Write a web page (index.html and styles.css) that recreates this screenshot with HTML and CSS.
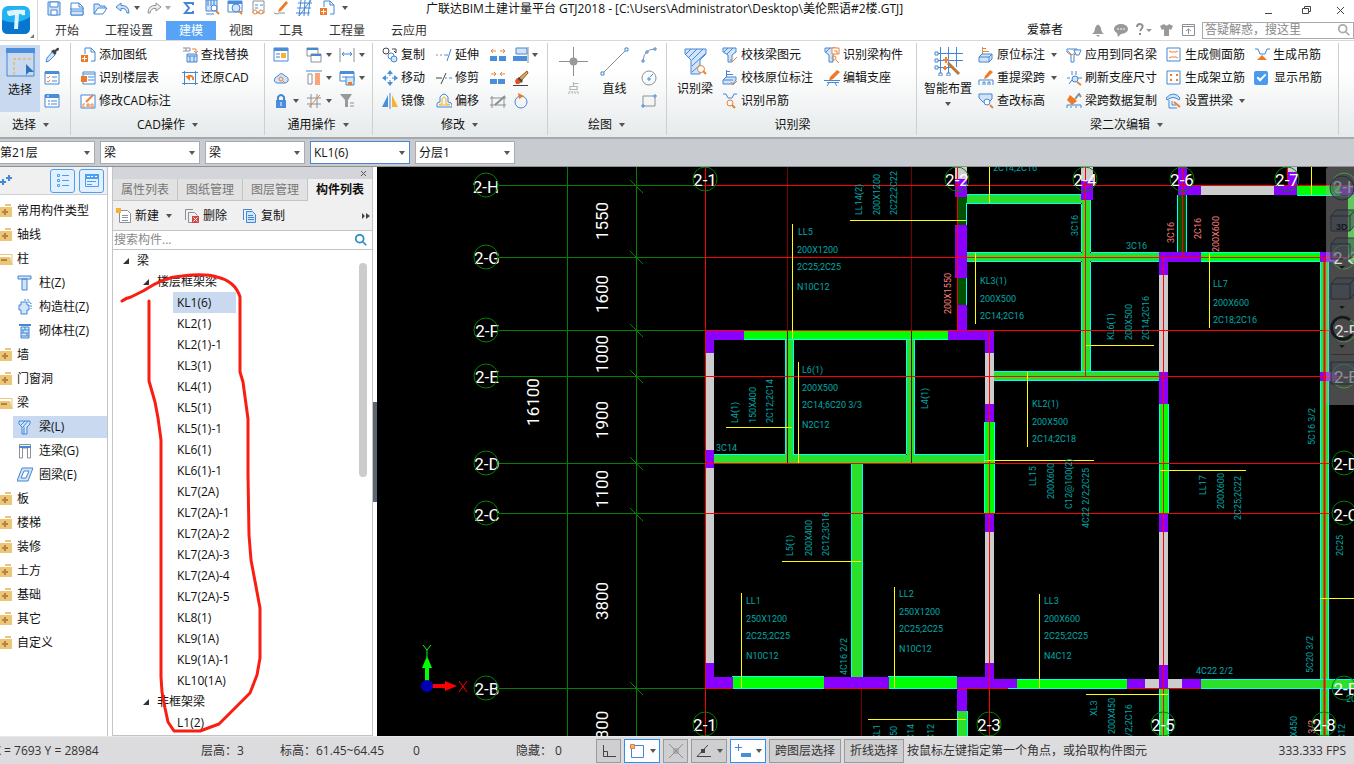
FILE: index.html
```
<!DOCTYPE html>
<html lang="zh-CN">
<head>
<meta charset="utf-8">
<title>广联达BIM土建计量平台 GTJ2018</title>
<link rel="stylesheet" href="styles.css">
</head>
<body>
<svg class="sprite" aria-hidden="true">
<symbol id="save" viewBox="0 0 16 16"><path class="b p" d="M2 2h12v13H2z"/><path class="b w" d="M4 2h8v5H4zM5 10h6v5H5z"/></symbol>
<symbol id="file" viewBox="0 0 16 16"><path class="b w" d="M2 3h8l4 4v8H2z"/><path class="b" d="M10 3v4h4M1 9h14"/><path class="b p" d="M2 11h12v4H2z"/></symbol>
<symbol id="open" viewBox="0 0 16 16"><path class="b p" d="M2 14V4h5l1 2h5v3"/><path class="b w" d="M2 14l4-6h9l-4 6z"/></symbol>
<symbol id="undo" viewBox="0 0 16 16"><path class="b p" d="M6 3L1 7l5 4V8.500q5-1 6 4.500h2q0-8-8-7.500z"/></symbol>
<symbol id="redo" viewBox="0 0 16 16"><path class="g pg" d="M10 3l5 4-5 4V8.500q-5-1-6 4.500H2q0-8 8-7.500z"/></symbol>
<symbol id="sum" viewBox="0 0 16 16"><path class="b2" d="M12 5V3H4l4 5-4 5h8v-2"/></symbol>
<symbol id="calc" viewBox="0 0 16 16"><path class="b p" d="M2 0h11v11H2z"/><path class="b" d="M4 0v6M7 0v6M10 0v6M2 14h8"/><circle class="b w" cx="10" cy="8" r="3"/><path class="o2" d="M12 11l3 3"/></symbol>
<symbol id="view" viewBox="0 0 16 16"><path class="b w" d="M1 1h14v11H1z"/><path class="fb" d="M1 1h14v3H1z"/><circle class="b p" cx="9" cy="8" r="4"/><path class="o2" d="M12 11l3 3"/></symbol>
<symbol id="clip" viewBox="0 0 16 16"><path class="g w" d="M3 1h11v12H3z"/><path class="b" d="M5 5h3M10 5h3M5 8h3"/><circle class="o w" cx="5" cy="12" r="2"/><circle class="o w" cx="11" cy="12" r="2"/><path class="o" d="M7 12h2"/></symbol>
<symbol id="pen" viewBox="0 0 16 16"><path class="fo" d="M13 1l2 2-7 8-3 1 1-3z"/><path class="g" d="M1 13q4 2 5 0h6"/></symbol>
<symbol id="gridi" viewBox="0 0 16 16"><path class="b" d="M2 3h14M1 8h14M0 13h14M5 0L3 16M9 0L8 16M14 0l-2 16M3 16L15 0"/></symbol>
<symbol id="addfile" viewBox="0 0 16 16"><path class="b w" d="M5 7V1h6l4 4v9h-4"/><path class="b" d="M11 1v4h4"/><path class="fo" d="M1 8h7v7H1z"/><path class="wh" d="M4.500 9v5M2 11.500h5"/></symbol>
<symbol id="drop" viewBox="0 0 16 16"><path class="fd" d="M9 3q1-1 2 0l2-2q2-1 2 1t-2 2l-1 1q1 1 0 2l-1 1-4-4z"/><path class="b p" d="M8 5l3 3-6 6-3 1 1-4z"/></symbol>
<symbol id="checks" viewBox="0 0 16 16"><path class="b w" d="M1 2h14v12H1z"/><path class="fb" d="M1 1h14v3H1z"/><path class="o" d="M3 7l1 1 2-2M3 11l1 1 2-2"/><path class="b" d="M8 7h5M8 11h5"/></symbol>
<symbol id="lists" viewBox="0 0 16 16"><path class="b w" d="M1 2h14v12H1z"/><path class="fb" d="M1 1h14v4H1z"/><path class="b" d="M4 8h2M7 8h6M4 11h2M7 11h6"/><path class="wh" d="M3 3h2"/></symbol>
<symbol id="layers" viewBox="0 0 16 16"><path class="b w" d="M3 2h12v12H3z"/><path class="b" d="M3 4h12M8 7h6M8 10h6"/><path class="fo" d="M1 6h6v6H1z"/></symbol>
<symbol id="cad" viewBox="0 0 16 16"><path class="b w" d="M1 2h14v13H1z"/><path class="o" d="M5 11H3v3h2M7 14v-3h2v3M7 13h2M11 11h2v3h-2z"/><path class="o2" d="M6 9l7-7"/></symbol>
<symbol id="replace" viewBox="0 0 16 16"><path class="g" d="M1 1h7v3H1M4 1v3"/><path class="o" d="M10 2h4v4M12 4l2 2 2-2"/><path class="b p" d="M5 7h10v8H5z"/><path class="b" d="M5 9h10M8 9v6M12 9v6"/></symbol>
<symbol id="restore" viewBox="0 0 16 16"><path class="b" d="M2.500 1v14M13.500 1v14M0 2.500h16M0 13.500h16"/><path class="o2" d="M11 10q1-5-5-4"/><path class="fo" d="M3 6h5v5z"/></symbol>
<symbol id="win1" viewBox="0 0 16 16"><path class="b w" d="M1 1h14v13H1z"/><path class="fb" d="M1 1h14v3H1z"/><path class="b" d="M3 7h4M3 10h4"/><path class="fy" d="M8 6h5v5H8z"/></symbol>
<symbol id="cloud" viewBox="0 0 16 16"><path class="b p" d="M4 13q-4-1-2-5 2-2 3-2 3-5 7 0 4 1 3 5-1 2-3 2z"/><circle class="o" cx="8" cy="9" r="2"/><path class="o" d="M10 11l2 2"/></symbol>
<symbol id="lock" viewBox="0 0 16 16"><path class="fb" d="M3 7h10v8H3z"/><path class="b2" d="M5 8V4q3-4 6 0v4"/><path class="wh" d="M8 9v4"/></symbol>
<symbol id="wins" viewBox="0 0 16 16"><path class="g w" d="M1 1h11v8H1z"/><path class="b2" d="M1 2h11"/><path class="g w" d="M5 7h10v8H5z"/><path class="b2" d="M5 8h10"/></symbol>
<symbol id="bars" viewBox="0 0 16 16"><path class="b" d="M0 1h16"/><path class="g w" d="M2 4h4v10H2z"/><path class="fs" d="M9 3h5v12H9z"/></symbol>
<symbol id="hash" viewBox="0 0 16 16"><path class="g" d="M5 1v14M11 1v14M1 5h14M1 11h14"/><path class="o" d="M3 14L14 2"/></symbol>
<symbol id="dim" viewBox="0 0 16 16"><path class="g" d="M1 1v14M15 1v14"/><path class="b" d="M3 7h10M5 5L3 7l2 2M11 5l2 2-2 2"/></symbol>
<symbol id="winsave" viewBox="0 0 16 16"><path class="b w" d="M1 2h14v9H1z"/><path class="fb" d="M1 1h14v3H1z"/><path class="b" d="M3 7h5"/><path class="b p" d="M7 7h8v8H7z"/><path class="fo" d="M9 12h4v3H9z"/></symbol>
<symbol id="funnelg" viewBox="0 0 16 16"><path class="fg" d="M1 1h12L9 7v7H6V7z"/><path class="g" d="M11 10h4M11 13h4"/></symbol>
<symbol id="copy2" viewBox="0 0 16 16"><circle class="d w" cx="4" cy="4" r="3"/><path class="d" d="M10 2h4v4M12 4l2 2"/><circle class="b w" cx="9" cy="9" r="3"/><circle class="b p" cx="12" cy="12" r="3"/></symbol>
<symbol id="move" viewBox="0 0 16 16"><path class="b" d="M8 1v5M8 10v5M1 8h5M10 8h5"/><path class="fb" d="M5 4l3-4 3 4zM5 12l3 4 3-4zM4 5L0 8l4 3zM12 5l4 3-4 3z"/></symbol>
<symbol id="mirror" viewBox="0 0 16 16"><path class="fb" d="M6 2v12H0z"/><path class="b" d="M8 0v16"/><path class="fy" d="M10 2v12h6z"/></symbol>
<symbol id="extend" viewBox="0 0 16 16"><path class="g" d="M0 8h2M4 8h2M8 8h2"/><path class="b" d="M10 8h2M11 14l4-12"/></symbol>
<symbol id="trim" viewBox="0 0 16 16"><path class="d" d="M0 8h6M5 14L10 3"/><path class="b" d="M9 8h2M13 8h3"/></symbol>
<symbol id="offset" viewBox="0 0 16 16"><path class="b" d="M1 14v-3q0-2 3-2V4q4-6 8 0v5q4 0 4 3v2z"/><path class="yl" d="M3 12q0-1 3-1V6q2-4 4 0v5q4 0 4 1z"/></symbol>
<symbol id="brk" viewBox="0 0 16 16"><path class="fb" d="M0 9h7v5H0zM9 9h7v5H9z"/><path class="o" d="M1 4h5M3 2L1 4l2 2M10 4h5M13 2l2 2-2 2"/></symbol>
<symbol id="join" viewBox="0 0 16 16"><path class="fb" d="M0 9h7v5H0zM8 9h7v5H8z"/><path class="o" d="M1 4h5M4 2l2 2-2 2M10 4h5M12 2l-2 2 2 2"/></symbol>
<symbol id="split" viewBox="0 0 16 16"><path class="g" d="M2 3v12M14 3v12M0 5h16M0 12h16"/><path class="g2" d="M5 12l10-9"/></symbol>
<symbol id="align" viewBox="0 0 16 16"><path class="b p" d="M3 1h11v6H3z"/><path class="fb" d="M0 9h14v5H0z"/><path class="g" d="M15 0v16"/></symbol>
<symbol id="brush" viewBox="0 0 16 16"><path class="d" d="M0 15.500h15"/><path fill="#e0a566" stroke="#8a5a24" d="M14 1l1 2-7 8-2-3z"/><path class="fd" d="M6 7l4 4-2 2-4-4z"/><path fill="#e0521f" d="M4 8l4 4-2 2H3l-1-3z"/></symbol>
<symbol id="rotate" viewBox="0 0 16 16"><circle class="b" cx="8" cy="9" r="6"/><path class="fo" d="M5 0l6 3-5 3z"/></symbol>
<symbol id="arc" viewBox="0 0 16 16"><path class="g" d="M2 14Q3 2 14 2"/><path class="b w" d="M1 13h2v2H1zM13 1h2v2h-2zM5 4h2v2H5z"/></symbol>
<symbol id="circ" viewBox="0 0 16 16"><circle class="g" cx="8" cy="8" r="7"/><path class="b" d="M7 8h2v2H7zM9 7l3-3"/></symbol>
<symbol id="rect" viewBox="0 0 16 16"><path class="g" d="M2 3h12v10H2z"/><path class="b w" d="M13 2h2v2h-2zM1 12h2v2H1z"/></symbol>
<symbol id="beam" viewBox="0 0 16 16"><path class="b p" d="M2 2h11v3l-3 3v7H5V8L2 5z"/><path class="b" d="M4 6l4-4M6 8l5-6M7 15V8"/></symbol>
<symbol id="beamchk" viewBox="0 0 16 16"><path class="b p" d="M1 1h13v4l-4 3v7H6V8L1 5z"/><path class="b" d="M2 5l4-4M5 7l6-6"/><path class="o" d="M8 12l2 3 5-5"/></symbol>
<symbol id="orig" viewBox="0 0 16 16"><path class="o" d="M4.500 0v8M4 1.500h4M4 4.500h7"/><path class="b p" d="M1 10l3-3h10v5l-3 3H1zM1 10h10v5M11 10l3-3"/></symbol>
<symbol id="origchk" viewBox="0 0 16 16"><path class="b" d="M4.500 0v8M4 1.500h4M4 4.500h7"/><path class="b p" d="M1 10l3-3h10v3l-3 4H1zM1 10h10"/><path class="o" d="M9 12l2 3 4-4"/></symbol>
<symbol id="hang" viewBox="0 0 16 16"><path class="b" d="M1 1h3l2 4h4l2-4h3"/><circle class="o" cx="8" cy="10" r="3"/><path class="o2" d="M10 12l3 3"/></symbol>
<symbol id="beamid" viewBox="0 0 16 16"><path class="b p" d="M1 1h11v4L9 8v7H5V8L1 5z"/><path class="b" d="M2 5l4-4"/><path class="o w" d="M8 1h7v6H8zM10 4h3v3"/><circle class="o" cx="10" cy="11" r="2"/><path class="o" d="M12 13l3 3"/></symbol>
<symbol id="seat" viewBox="0 0 16 16"><path class="fo" d="M13 0l3 2-7 7-4 2 1-4z"/><path class="b" d="M0 10.500h16M3 12.500h12M5 13l-2 3M11 13l2 3"/></symbol>
<symbol id="span" viewBox="0 0 16 16"><path class="fo" d="M12 0l3 2-6 6-3 1 1-3z"/><path class="b" d="M1 15v-5h14v5M5 15v-3h2v3M10 15v-3h2v3"/></symbol>
<symbol id="elev" viewBox="0 0 16 16"><path class="b p" d="M1 1h13v5l-3 3H5L1 5z"/><circle class="b w" cx="9" cy="9" r="3"/><path class="o2" d="M12 12l3 3"/></symbol>
<symbol id="apply" viewBox="0 0 16 16"><path class="b w" d="M1 2h10v3L8 8v7H5V8L1 5z"/><path class="o" d="M2 4l4 4 5-4"/><path class="b w" d="M8 3h7l-2 5h-3z"/></symbol>
<symbol id="refresh" viewBox="0 0 16 16"><path class="b" d="M6 1v4M10 1v4M1 8h3M12 8h4M3 14l3-4"/><circle class="b p" cx="9" cy="9" r="3"/><path class="o2" d="M11 12l4 3"/></symbol>
<symbol id="spancopy" viewBox="0 0 16 16"><path class="g2" d="M9 6l4-5 2 3"/><path class="fo" d="M4 2l7 6-5 4-5-5z"/><path class="b" d="M1 15v-3h14v3M5 15v-2M10 15v-2"/></symbol>
<symbol id="side" viewBox="0 0 16 16"><path class="b w" d="M1 1h13v13H1z"/><path class="o" d="M3 4l2 1h5l2-1M3 11l2-1h5l2 1"/></symbol>
<symbol id="dots" viewBox="0 0 16 16"><path class="b w" d="M1 1h13v13H1z"/><path class="fo" d="M4 4h2v2H4zM10 4h2v2h-2zM4 9h2v2H4zM10 9h2v2h-2z"/></symbol>
<symbol id="arch" viewBox="0 0 16 16"><path class="b p" d="M0 5q8-8 14 0l-1 2q-6-5-12 0z"/><path class="b" d="M3 7v8h8M6 8v4h4"/><path class="o2" d="M8 9l6 5"/></symbol>
<symbol id="hang2" viewBox="0 0 16 16"><path class="b" d="M1 2h3l2 5h5l2-5h3"/><path class="fo" d="M3 13h10L8 8z"/></symbol>
<symbol id="search" viewBox="0 0 16 16"><circle class="c" cx="6.500" cy="6.500" r="4.500"/><path class="c" d="M10 10l4 4"/></symbol>
<symbol id="fold" viewBox="0 0 16 16"><path class="ft" d="M0 4h12v10H0zM5 1h6v2H5z"/><path class="tb" d="M5 6v6M2 9h6"/></symbol>
<symbol id="folded" viewBox="0 0 16 16"><path class="tl" d="M0 3.500h12v9"/><path class="ft" d="M0 6h10l3 8H0z"/><path class="tb" d="M1 9h6"/></symbol>
<symbol id="col" viewBox="0 0 16 16"><path class="b p" d="M1 1h13v3H1zM5 4h5v11H5z"/></symbol>
<symbol id="col2" viewBox="0 0 16 16"><path class="b" stroke-dasharray="2 1" d="M7 1h5v3h2v6"/><path class="b p" d="M4 3h6v3h2v5h-2v4H4v-4H2V6h2z"/></symbol>
<symbol id="col3" viewBox="0 0 16 16"><path class="b2" d="M2 2h12"/><path class="b p" d="M4 4h8v11H4z"/><path class="b" d="M4 7h8M4 10h8M4 13h8M8 4v3M6 7v3M10 10v3"/></symbol>
<symbol id="link" viewBox="0 0 16 16"><path class="g w" d="M2.500 15V1.500h11V15h-3V5h-5v10z"/><path class="b2" d="M2 4h12"/></symbol>
<symbol id="ring" viewBox="0 0 16 16"><path class="b p" d="M5 1h11l-5 13H0z"/><path class="b w" d="M7 4h5l-3 7H4z"/></symbol>
</svg>

<header class="top">
  <div class="logo"><svg viewBox="0 0 30 30"><rect x="0" y="0" width="28" height="28" rx="6" fill="#22b4f2"/><path d="M0 14q14 6 28-3v11q0 6-6 6H6q-6 0-6-6z" fill="#0876cf"/><path d="M5 5q9-2 18-1v5q-3 1-4-1h-2l-1 15h-4l1-14-5 1q-3 0-3-5z" fill="#ddf3ff"/></svg><i class="corner"></i></div>
  <div class="titlebar">
    <div class="quick">
      <svg class="ic"><use href="#save"/></svg><svg class="ic"><use href="#file"/></svg><svg class="ic"><use href="#open"/></svg>
      <svg class="ic"><use href="#undo"/></svg><i class="caret near"></i><svg class="ic"><use href="#redo"/></svg><i class="caret near dim"></i>
      <svg class="ic"><use href="#sum"/></svg><svg class="ic"><use href="#calc"/></svg><svg class="ic"><use href="#view"/></svg><svg class="ic"><use href="#clip"/></svg><svg class="ic"><use href="#pen"/></svg><svg class="ic"><use href="#gridi"/></svg><svg class="ic"><use href="#addfile"/></svg><i class="caret bar"></i>
    </div>
    <h1>广联达BIM土建计量平台 GTJ2018 - [C:\Users\Administrator\Desktop\美伦熙语#2楼.GTJ]</h1>
    <div class="winbtns"><svg viewBox="0 0 90 16"><path class="d" d="M6 11.500h7M43.500 6.500h6v5h-6zM45.500 6V4.500h6v5h-2M78 5l7 7M85 5l-7 7"/></svg></div>
  </div>
  <nav class="tabs">
    <button>开始</button><button>工程设置</button><button class="on">建模</button><button>视图</button><button>工具</button><button>工程量</button><button>云应用</button>
    <span class="user">爱慕者</span>
    <svg class="usericons" viewBox="0 0 110 18"><path class="fg" d="M2 13q3-2 3-6 3-7 6 0 0 4 3 6zM6 14h4l-2 2z"/><ellipse class="fg" cx="31" cy="8" rx="7" ry="5"/><path class="fg" d="M27 12h5l-4 4z"/><path class="wh" d="M27 8h2M30 8h2M33 8h2"/><path class="g2" d="M47 6q0-3 3-3 4 1 2 4l-2 3M50 12v2"/><path class="fg" d="M56 8h6l-3 3zM70 5l4-2q3 3 5 0l4 2-2 4-2-1v7h-5V8l-2 1z"/><path class="g" d="M92.500 3.500h12v11h-12zM92 5.500h13M98.500 13V8M96 10l2.500-2 2.500 2"/></svg>
    <label class="ask"><input type="text" aria-label="搜索" placeholder="答疑解惑，搜这里"><svg class="ic"><use href="#search"/></svg></label>
  </nav>
</header>

<section class="ribbon">
  <div class="group g1"><div class="gb">
    <button class="big sel"><svg class="bi" viewBox="0 0 29 29"><path class="b" fill="#dfeafa" d="M1 1h27v27H1z"/><path class="fb" d="M0 0h29v5H0z"/><path fill="none" stroke="#f0ae20" stroke-dasharray="3 2" d="M8 27V11h20"/><path fill="#2f72bd" d="M20 16v11l3-3h5z"/></svg>选择</button>
    <div class="cols"><button aria-label="拾取"><svg class="ic"><use href="#drop"/></svg></button><button aria-label="批量选择"><svg class="ic"><use href="#checks"/></svg></button><button aria-label="属性"><svg class="ic"><use href="#lists"/></svg></button></div>
  </div><div class="gl">选择<i class="caret"></i></div></div>

  <div class="group g2c"><div class="gb"><div class="cols">
    <button><svg class="ic"><use href="#addfile"/></svg>添加图纸</button><button><svg class="ic"><use href="#layers"/></svg>识别楼层表</button><button><svg class="ic"><use href="#cad"/></svg>修改CAD标注</button>
    <button><svg class="ic"><use href="#replace"/></svg>查找替换</button><button><svg class="ic"><use href="#restore"/></svg>还原CAD</button>
  </div></div><div class="gl">CAD操作<i class="caret"></i></div></div>

  <div class="group g3"><div class="gb"><div class="cols tight">
    <button><svg class="ic"><use href="#win1"/></svg></button><button><svg class="ic"><use href="#cloud"/></svg></button><button><svg class="ic"><use href="#lock"/></svg><i class="caret"></i></button>
    <button><svg class="ic"><use href="#wins"/></svg><i class="caret"></i></button><button><svg class="ic"><use href="#bars"/></svg><i class="caret"></i></button><button><svg class="ic"><use href="#hash"/></svg><i class="caret"></i></button>
    <button><svg class="ic"><use href="#dim"/></svg><i class="caret"></i></button><button><svg class="ic"><use href="#winsave"/></svg><i class="caret"></i></button><button><svg class="ic"><use href="#funnelg"/></svg></button>
  </div></div><div class="gl">通用操作<i class="caret"></i></div></div>

  <div class="group g4"><div class="gb"><div class="cols">
    <button><svg class="ic"><use href="#copy2"/></svg>复制</button><button><svg class="ic"><use href="#move"/></svg>移动</button><button><svg class="ic"><use href="#mirror"/></svg>镜像</button>
    <button><svg class="ic"><use href="#extend"/></svg>延伸</button><button><svg class="ic"><use href="#trim"/></svg>修剪</button><button><svg class="ic"><use href="#offset"/></svg>偏移</button>
    <button><svg class="ic"><use href="#brk"/></svg></button><button><svg class="ic"><use href="#join"/></svg></button><button><svg class="ic"><use href="#split"/></svg></button>
  </div><div class="cols edit">
    <button><svg class="ic"><use href="#align"/></svg><i class="caret"></i></button><button><svg class="ic"><use href="#brush"/></svg></button><button><svg class="ic"><use href="#rotate"/></svg></button>
  </div></div><div class="gl">修改<i class="caret"></i></div></div>

  <div class="group g5"><div class="gb">
    <button class="big off"><svg class="bi" viewBox="0 0 29 29"><path class="g" d="M14.500 0v29M0 14.500h29"/><circle class="fg" cx="14.500" cy="14.500" r="4"/></svg>点</button>
    <button class="big"><svg class="bi" viewBox="0 0 29 29"><path class="g" d="M2 27L27 2"/><path class="b w" d="M25 1h3v3h-3zM1 25h3v3H1z"/></svg>直线</button>
    <div class="cols"><button aria-label="弧"><svg class="ic"><use href="#arc"/></svg></button><button aria-label="圆"><svg class="ic"><use href="#circ"/></svg></button><button aria-label="矩形"><svg class="ic"><use href="#rect"/></svg></button></div>
  </div><div class="gl">绘图<i class="caret"></i></div></div>

  <div class="group g6"><div class="gb">
    <button class="big"><svg class="bi" viewBox="0 0 29 29"><path class="b p" d="M4 2h21v5l-6 6v14h-9V13L4 7z"/><path class="b" d="M5 7l5-5M8 10l8-8M11 13L22 2M11 19L24 7M11 25l8-7"/><circle class="o w" cx="20" cy="22" r="3.500"/><path class="o2" d="M22 24l3 3"/></svg>识别梁</button>
    <div class="cols">
    <button><svg class="ic"><use href="#beamchk"/></svg>校核梁图元</button><button><svg class="ic"><use href="#origchk"/></svg>校核原位标注</button><button><svg class="ic"><use href="#hang"/></svg>识别吊筋</button>
    <button><svg class="ic"><use href="#beamid"/></svg>识别梁构件</button><button><svg class="ic"><use href="#seat"/></svg>编辑支座</button>
  </div></div><div class="gl">识别梁</div></div>

  <div class="group g7"><div class="gb">
    <button class="big"><svg class="bi" viewBox="0 0 29 29"><path class="b" d="M6.500 0v29M14.500 0v29M22.500 0v20M2 6.500h27M2 13.500h27M2 20.500h18"/><path class="b w" d="M1 5h3v3H1zM1 12h3v3H1zM1 19h3v3H1zM5 26h3v3H5zM13 26h3v3h-3z"/><path class="o2" d="M9 13h6M12 10v6M11 19v4M9 21h4"/><path stroke="#b9783c" stroke-width="3" d="M14 16l11 11"/></svg>智能布置<i class="caret"></i></button>
    <div class="cols">
    <button><svg class="ic"><use href="#orig"/></svg>原位标注<i class="caret"></i></button><button><svg class="ic"><use href="#span"/></svg>重提梁跨<i class="caret"></i></button><button><svg class="ic"><use href="#elev"/></svg>查改标高</button>
    <button><svg class="ic"><use href="#apply"/></svg>应用到同名梁</button><button><svg class="ic"><use href="#refresh"/></svg>刷新支座尺寸</button><button><svg class="ic"><use href="#spancopy"/></svg>梁跨数据复制</button>
    <button><svg class="ic"><use href="#side"/></svg>生成侧面筋</button><button><svg class="ic"><use href="#dots"/></svg>生成架立筋</button><button><svg class="ic"><use href="#arch"/></svg>设置拱梁<i class="caret"></i></button>
    <button><svg class="ic"><use href="#hang2"/></svg>生成吊筋</button><label class="chk"><input type="checkbox" checked>显示吊筋</label>
  </div></div><div class="gl">梁二次编辑<i class="caret"></i></div></div>
</section>

<section class="filters">
  <span class="pick first"><select aria-label="楼层"><option>第21层</option></select></span>
  <span class="pick"><select aria-label="构件大类"><option>梁</option></select></span>
  <span class="pick"><select aria-label="构件类型"><option>梁</option></select></span>
  <span class="pick hot"><select aria-label="构件"><option>KL1(6)</option></select></span>
  <span class="pick"><select aria-label="分层"><option>分层1</option></select></span>
</section>

<main class="work">
  <aside class="types">
    <div class="tt"><svg class="ic pl" viewBox="0 0 16 16"><path class="b2" d="M0 9h6M3 6v6M6 5h6M9 2v6"/></svg>
      <button aria-label="列表"><svg viewBox="0 0 16 16"><path class="l" d="M2.500 1.500h2v2h-2zM2.500 6.500h2v2h-2zM2.500 11.500h2v2h-2zM7 2.500h7M7 7.500h7M7 12.500h7"/></svg></button>
      <button aria-label="窗口"><svg viewBox="0 0 16 16"><path class="l" d="M1.500 2.500h13v11h-13zM3 8.500h9M3 11.500h5"/><path fill="#4ba0f5" d="M1 1h14v5H1z"/><path class="wh" d="M3 3.500h3M7 3.500h2M11 3.500h2"/></svg></button></div>
    <ul>
      <li><svg class="ic"><use href="#fold"/></svg>常用构件类型</li><li><svg class="ic"><use href="#fold"/></svg>轴线</li><li><svg class="ic"><use href="#folded"/></svg>柱</li>
      <li class="sub"><svg class="ic"><use href="#col"/></svg>柱(Z)</li><li class="sub"><svg class="ic"><use href="#col2"/></svg>构造柱(Z)</li><li class="sub"><svg class="ic"><use href="#col3"/></svg>砌体柱(Z)</li>
      <li><svg class="ic"><use href="#fold"/></svg>墙</li><li><svg class="ic"><use href="#fold"/></svg>门窗洞</li><li><svg class="ic"><use href="#folded"/></svg>梁</li>
      <li class="sub on"><svg class="ic"><use href="#beam"/></svg>梁(L)</li><li class="sub"><svg class="ic"><use href="#link"/></svg>连梁(G)</li><li class="sub"><svg class="ic"><use href="#ring"/></svg>圈梁(E)</li>
      <li><svg class="ic"><use href="#fold"/></svg>板</li><li><svg class="ic"><use href="#fold"/></svg>楼梯</li><li><svg class="ic"><use href="#fold"/></svg>装修</li><li><svg class="ic"><use href="#fold"/></svg>土方</li><li><svg class="ic"><use href="#fold"/></svg>基础</li><li><svg class="ic"><use href="#fold"/></svg>其它</li><li><svg class="ic"><use href="#fold"/></svg>自定义</li>
    </ul>
  </aside>
  <aside class="parts">
    <div class="ph"><svg viewBox="0 0 8 8"><path d="M1 1l5 5M6 1L1 6" stroke="#555"/></svg></div>
    <div class="pt"><button>属性列表</button><button>图纸管理</button><button>图层管理</button><button class="on">构件列表</button></div>
    <div class="pb">
      <button><svg class="ic" viewBox="0 0 16 16"><path class="g w" d="M3.500 2.500h8l3 3v9h-11z"/><path class="g" d="M6 7.500h6M6 9.500h6M6 12.500h6"/><path class="fy" d="M0 0h5v5H0z"/></svg>新建<i class="caret"></i></button>
      <button><svg class="ic" viewBox="0 0 16 16"><path class="g" d="M1.500 12V1.500H9M8 14.500H4.500v-10h6l3 3"/><path fill="#cf4646" d="M8 8h7v7H8z"/><path class="wh" d="M9.500 9.500l4 4M13.500 9.500l-4 4"/></svg>删除</button>
      <button><svg class="ic" viewBox="0 0 16 16"><path class="b" d="M1.500 12V1.500H10"/><path class="b p" d="M4.500 3.500h6l3 3v8h-9z"/><path class="b" d="M6 7.500h5M6 9.500h6M6 11.500h6"/></svg>复制</button>
      <svg class="more" viewBox="0 0 8 8"><path fill="#444" d="M0 1l3 3-3 3zM4 1l4 3-4 3z"/></svg></div>
    <label class="ps"><input type="text" aria-label="搜索构件" placeholder="搜索构件..."><svg class="ic"><use href="#search"/></svg></label>
    <div class="tree"><ul>
      <li class="t1"><i class="tw"></i>梁</li><li class="t2"><i class="tw"></i>楼层框架梁</li>
      <li class="on"><span>KL1(6)</span></li><li>KL2(1)</li><li>KL2(1)-1</li><li>KL3(1)</li><li>KL4(1)</li><li>KL5(1)</li><li>KL5(1)-1</li><li>KL6(1)</li><li>KL6(1)-1</li><li>KL7(2A)</li><li>KL7(2A)-1</li><li>KL7(2A)-2</li><li>KL7(2A)-3</li><li>KL7(2A)-4</li><li>KL7(2A)-5</li><li>KL8(1)</li><li>KL9(1A)</li><li>KL9(1A)-1</li><li>KL10(1A)</li>
      <li class="t2"><i class="tw"></i>非框架梁</li><li>L1(2)</li></ul><i class="bar"></i></div>
  </aside>
  <div class="split"><i></i></div>
  <svg class="cad"><g transform="translate(-377 -167)">
    <g class="axg"><path d="M567.500 167v569M636.500 167v569M499 185.500h206M499 257.500h206M499 330.500h206M499 376.500h206M499 463.500h206M499 513.500h206M499 688.500h206M630 180l13 13M630 251l13 13M630 324l13 13M630 370l13 13M630 457l13 13M630 508l13 13M630 682l13 13"/></g>
    <path class="dr" d="M787.500 167v296M911.500 167v296M861.500 688v48"/>
    <g class="gn"><path d="M961 195h121v8H961zM1082 199h8v178h-8zM967 253h193v8H967zM1320 262h8v474h-8zM990 372h169v8H990zM785 340h8v115h-8zM907 340h7v115h-7zM714 455h271v8H714zM851 463h11v214h-11zM1201 680h153v8h-153zM1159 689h10v47h-10zM957 711h10v25h-10zM1348 185h6v77h-6z"/></g>
    <path class="dg" d="M957 197h10v28h-10zM957 278h10v27h-10zM1178 195h9v57h-9z"/>
    <path class="br" d="M1201 253h119v9h-119zM1297 186h43v9h-43zM744 331h204v8H744zM985 422h9v92h-9zM1160 404h8v110h-8zM733 677h91v11h-91zM889 677h68v11h-68zM1017 680h110v8h-110z"/>
    <path class="cy" d="M966 194.500h115M966 203.500h115M967 252.500h114M967 261.500h114M1091 252.500h69M1091 261.500h69M1081.500 204v48M1081.500 262v109M1090.500 200v52M1090.500 262v109M1201 252.500h119M1201 261.500h119M1320.500 262v418M1328.500 262v418M1320.500 689v47M1328.500 689v47M994 371.500h165M994 380.500h165M785.500 340v114M793.500 340v114M906.500 340v114M914.500 340v114M744 330.500h204M744 339.500h204M714 454.500h71M793 454.500h113M914 454.500h71M714 463.500h137M862 463.500h123M851.500 464v213M862.500 464v213M984.500 422v92M994.500 422v92M1159.500 404v110M1168.500 404v110M732 676.500h92M732 688.500h92M888 676.500h69M888 688.500h69M1008 679.500h119M1008 688.500h119M1201 679.500h153M1201 688.500h153M957.500 197v28M966.500 204v21M957.500 278v27M966.500 278v27M1177.500 195v57M1186.500 195v57M1159.500 689v47M1168.500 689v47M957.500 711v25M967.500 711v25M1297 195.500h43"/>
    <path class="gy" d="M955 167h12v12h-12zM1081 167h12v16h-12zM1159 275h9v97h-9zM1159 532h9v133h-9zM1201 186h73v9h-73zM705 353h9v97h-9zM705 468h9v195h-9zM985 353h9v51h-9zM985 532h9v131h-9zM1145 679h37v9h-37zM1288 167h9v6h-9z"/>
    <path class="pu" d="M955 179h12v18h-12zM955 225h12v53h-12zM957 305h10v26h-10zM1081 181h12v19h-12zM1160 252h41v10h-41zM1159 252h9v23h-9zM1159 372h9v32h-9zM1159 514h9v18h-9zM1159 665h9v23h-9zM1320 252h17v10h-17zM1320 372h17v9h-17zM1178 167h9v27h-9zM1178 185h23v10h-23zM1274 185h23v10h-23zM1288 172h9v13h-9zM1340 185h14v10h-14zM705 331h39v9h-39zM948 331h46v9h-46zM705 331h9v22h-9zM705 450h9v18h-9zM705 663h9v25h-9zM985 331h9v22h-9zM985 404h9v18h-9zM985 514h9v18h-9zM985 663h9v25h-9zM705 677h28v11h-28zM824 677h65v11h-65zM957 677h37v11h-37zM994 679h23v9h-23zM1127 679h18v9h-18zM1182 679h19v9h-19zM957 688h10v23h-10z"/>
    <path class="rd" d="M705 185.500h649M705 257.500h649M705 330.500h625M705 376.500h648M705 463.500h625M705 513.500h625M705 688.500h28M824 688.500h65M957 688.500h51M1127 688.500h74M705.500 167v569M957.500 167v164M989.500 330v406M1085.500 167v210M1163.500 257v479M1182.500 167v90M1287.500 167v14"/><path class="rd wide" d="M1324.500 257v479"/>
    <path class="dr" d="M787.500 331v132M911.500 331v132"/>
    <path class="ye" d="M792.500 224v115M850 220.500h116M989.500 167v36M975.500 253v71M798.500 362v101M726 427.500h66M1086 345.500h68M1209.500 253v75M1027.500 372v75M984 460.500h110M1160 470.500h86M782 561.500h79M741.500 593v95M894.500 587v101M1039.500 594v94M868 719.500h98M1086 694.500h82M1320 598.500h34M1311.500 167v28"/>
    <g class="t">
      <text x="798" y="235">LL5</text><text x="797" y="253">200X1200</text><text x="797" y="270">2C25;2C25</text><text x="797" y="290">N10C12</text>
      <text x="980" y="284">KL3(1)</text><text x="980" y="302">200X500</text><text x="980" y="319">2C14;2C16</text>
      <text x="993" y="171">2C14;2C16</text><text x="1126" y="249">3C16</text>
      <text x="1213" y="287">LL7</text><text x="1213" y="306">200X600</text><text x="1213" y="323">2C18;2C16</text>
      <text x="802" y="373">L6(1)</text><text x="802" y="391">200X500</text><text x="802" y="408">2C14;6C20 3/3</text><text x="802" y="428">N2C12</text>
      <text x="1032" y="407">KL2(1)</text><text x="1032" y="425">200X500</text><text x="1032" y="442">2C14;2C18</text><text x="716" y="451">3C14</text>
      <text x="746" y="604">LL1</text><text x="746" y="622">250X1200</text><text x="746" y="639">2C25;2C25</text><text x="746" y="659">N10C12</text>
      <text x="899" y="597">LL2</text><text x="899" y="615">250X1200</text><text x="899" y="632">2C25;2C25</text><text x="899" y="652">N10C12</text>
      <text x="1044" y="604">LL3</text><text x="1044" y="622">200X600</text><text x="1044" y="639">2C25;2C25</text><text x="1044" y="659">N4C12</text><text x="1196" y="674">4C22 2/2</text>
      <text transform="translate(862 215)rotate(-90)">LL14(2)</text><text transform="translate(880 215)rotate(-90)">200X1200</text><text transform="translate(897 215)rotate(-90)">2C22;2C22</text>
      <text transform="translate(738 423)rotate(-90)">L4(1)</text><text transform="translate(756 423)rotate(-90)">150X400</text><text transform="translate(773 423)rotate(-90)">2C12;2C14</text><text transform="translate(928 409)rotate(-90)">L4(1)</text>
      <text transform="translate(1078 236)rotate(-90)">3C16</text><text transform="translate(1114 340)rotate(-90)">KL6(1)</text><text transform="translate(1132 340)rotate(-90)">200X500</text><text transform="translate(1149 340)rotate(-90)">2C14;2C16</text>
      <text transform="translate(793 556)rotate(-90)">L5(1)</text><text transform="translate(812 556)rotate(-90)">200X400</text><text transform="translate(829 556)rotate(-90)">2C12;3C16</text><text transform="translate(847 675)rotate(-90)">4C16 2/2</text>
      <text transform="translate(1036 486)rotate(-90)">LL15</text><text transform="translate(1054 499)rotate(-90)">200X600</text><text transform="translate(1072 509)rotate(-90)">C12@100(2)</text><text transform="translate(1089 528)rotate(-90)">4C22 2/2;2C25</text>
      <text transform="translate(1206 495)rotate(-90)">LL17</text><text transform="translate(1224 509)rotate(-90)">200X600</text><text transform="translate(1241 520)rotate(-90)">2C25;2C22</text>
      <text transform="translate(1315 445)rotate(-90)">5C16 3/2</text><text transform="translate(1343 556)rotate(-90)">2C25</text><text transform="translate(1313 673)rotate(-90)">5C20 3/2</text>
      <text transform="translate(1097 716)rotate(-90)">XL3</text><text transform="translate(1115 734)rotate(-90)">200X450</text><text transform="translate(1132 741)rotate(-90)">2/2;2C16</text>
      <text transform="translate(880 740)rotate(-90)">KL1</text><text transform="translate(897 741)rotate(-90)">250</text><text transform="translate(914 745)rotate(-90)">2C14</text><text transform="translate(934 745)rotate(-90)">2C12</text><text transform="translate(1297 752)rotate(-90)">200X450</text><text transform="translate(1345 745)rotate(-90)">2C12</text><text x="1346" y="702">2C</text>
    </g>
    <g class="t pk"><text transform="translate(951 314)rotate(-90)">200X1550</text><text transform="translate(1174 243)rotate(-90)">3C16</text><text transform="translate(1201 239)rotate(-90)">2C16</text><text transform="translate(1219 252)rotate(-90)">200X600</text><text transform="translate(1315 741)rotate(-90)">2 3/2</text></g>
    <g class="ax"><text x="486" y="193">2-H</text><text x="487" y="264">2-G</text><text x="487" y="337">2-F</text><text x="487" y="383">2-E</text><text x="487" y="470">2-D</text><text x="487" y="521">2-C</text><text x="487" y="695">2-B</text>
      <text x="705" y="186">2-1</text><text x="957" y="186">2-2</text><text x="1085" y="186">2-4</text><text x="1182" y="186">2-6</text><text x="1287" y="186">2-7</text><text x="705" y="731">2-1</text><text x="989" y="731">2-3</text><text x="1163" y="731">2-5</text><text x="1324" y="731">2-8</text>
      <text x="1346" y="193">2-H</text><text x="1346" y="264">2-G</text><text x="1346" y="337">2-F</text><text x="1346" y="383">2-E</text><text x="1346" y="470">2-D</text><text x="1346" y="521">2-C</text><text x="1346" y="695">2-B</text>
      <text transform="translate(608 221)rotate(-90)">1550</text><text transform="translate(608 294)rotate(-90)">1600</text><text transform="translate(608 354)rotate(-90)">1000</text><text transform="translate(608 420)rotate(-90)">1900</text><text transform="translate(608 489)rotate(-90)">1100</text><text transform="translate(608 601)rotate(-90)">3800</text><text transform="translate(608 725)rotate(-90)">800</text><text transform="translate(539 402)rotate(-90)">16100</text></g>
    <g class="axg"><circle cx="486" cy="185" r="12"/><circle cx="486" cy="257" r="12"/><circle cx="486" cy="330" r="12"/><circle cx="486" cy="376" r="12"/><circle cx="486" cy="463" r="12"/><circle cx="486" cy="513" r="12"/><circle cx="486" cy="688" r="12"/><circle cx="705" cy="179" r="12"/><circle cx="957" cy="179" r="12"/><circle cx="1085" cy="179" r="12"/><circle cx="1182" cy="179" r="12"/><circle cx="1287" cy="179" r="12"/><circle cx="705" cy="724" r="12"/><circle cx="989" cy="724" r="12"/><circle cx="1163" cy="724" r="12"/><circle cx="1324" cy="724" r="12"/><circle cx="1344" cy="185" r="12"/><circle cx="1344" cy="257" r="12"/><circle cx="1344" cy="330" r="12"/><circle cx="1344" cy="376" r="12"/><circle cx="1344" cy="463" r="12"/><circle cx="1344" cy="513" r="12"/><circle cx="1344" cy="688" r="12"/></g>
    <path fill="#0f0" d="M425 686v-18h-3l5-12 5 12h-3v18z"/><path fill="red" d="M427 684h18v-3l12 5-12 5v-3h-18z"/><circle cx="427" cy="686" r="6" fill="#00b"/>
    <path fill="none" stroke="#0f0" d="M423 645l4 5 4-5M427 650v7"/><path fill="none" stroke="red" d="M459 681l8 11M467 681l-8 11"/>
    <rect x="1326" y="167" width="40" height="238" rx="3" fill="#acacac" fill-opacity=".43"/>
    <g fill="#3c4654" fill-opacity=".5" stroke="#20262e" stroke-opacity=".8"><circle cx="1342" cy="188" r="12"/><path d="M1331 216l5-6h19v15l-5 6h-19zM1331 216h19v15M1350 216l5-6M1331 244l5-6h19v15l-5 6h-19zM1331 244h19v15M1331 284l5-6h19v15l-5 6h-19zM1331 284h19v15M1350 284l5-6M1331 362h24v22h-24z"/></g>
    <path fill="none" stroke="#15191e" stroke-width="3" d="M1350 320a11 11 0 1 0 2 14"/><path fill="#15191e" d="M1339 306h6l-3 3zM1339 345h6l-3 3zM1339 266h6l-3 3z"/><path stroke="#333" d="M1331 354.500h23"/><text x="1336" y="230" class="cube">3D</text>
  </g></svg>
  <svg class="mark"><path transform="translate(0 -167)" d="M122 301Q126 298 131 297L143 291Q164 277 182 276Q205 273 217 277Q235 281 240 297V372L243 382L248 419V475L249 535L251 560L260 608V658L257 675L250 693L238 705L219 724L200 731H174L168 722L165 708L162 692L161 677V440L158 418L155 402L149 381V301"/></svg>
</main>

<footer class="status">
  <span class="xy">X = 7693 Y = 28984</span><span class="s1">层高：3</span><span class="s2">标高：61.45~64.45</span><span class="s3">0</span><span class="s4">隐藏： 0</span>
  <button aria-label="正交"><svg viewBox="0 0 16 16"><path class="d" d="M2.500 2v11.500H15M2 8.500h4.500V13"/></svg></button>
  <button class="hot" aria-label="捕捉"><svg viewBox="0 0 16 16"><path class="b w" d="M2.500 2.500h12v12h-12z"/><path fill="#f4b183" stroke="#d9813f" d="M1.500 1.500h4v4h-4z"/></svg><i class="caret"></i></button>
  <button aria-label="交点"><svg viewBox="0 0 16 16"><path class="g" d="M1 1l14 14M15 1L1 15M6 6h4v4H6z"/></svg></button>
  <button aria-label="角度"><svg viewBox="0 0 16 16"><path class="d" d="M15 13.500H1L12 2"/><path class="fd" d="M5 6h4v4H5z"/></svg><i class="caret"></i></button>
  <button class="hot" aria-label="偏移"><svg viewBox="0 0 16 16"><path class="b" d="M0 4.500h7M3.500 1v7"/><path class="fb" d="M6 10h10v4H6z"/></svg><i class="caret"></i></button>
  <button class="txt">跨图层选择</button><button class="txt">折线选择</button>
  <span class="hint">按鼠标左键指定第一个角点，或拾取构件图元</span><span class="fps">333.333 FPS</span>
</footer>
</body>
</html>
```
FILE: styles.css
```
* { box-sizing: border-box; }
body { margin: 0; height: 100vh; display: flex; flex-direction: column; overflow: hidden; background: #fff; color: #111; font: 12px/16px "Open Sans", "Noto Sans CJK SC", sans-serif; }
button, input, select { font: inherit; color: inherit; border: 0; background: none; padding: 0; margin: 0; }
button { white-space: nowrap; }
ul { list-style: none; margin: 0; padding: 0; }
.sprite { position: absolute; width: 0; height: 0; }
.ic { width: 16px; height: 16px; flex: none; }
.b, .b2, .g, .g2, .d, .o, .o2, .c, .l, .wh, .yl, .tb, .tl { fill: none; stroke-width: 1; }
.b, .b2 { stroke: #4387d6; }
.g, .g2 { stroke: #8b9096; }
.b2, .g2, .o2 { stroke-width: 2; }
.d { stroke: #444; }
.o, .o2 { stroke: #e8833a; }
.c { stroke: var(--lens, #2a8cc8); stroke-width: 2; }
.l { stroke: #4ba0f5; }
.wh { stroke: #fff; }
.yl { stroke: #f5b52c; }
.tb { stroke: #b5843a; stroke-width: 2; }
.tl { stroke: #ecc579; }
.p { fill: #d3e4f8; }
.pg { fill: #eee; }
.w { fill: #fff; }
.fb { fill: #4a8edb; }
.fo { fill: #ee7a28; }
.fy { fill: #f5b236; }
.fs { fill: #fba37c; }
.fg { fill: #999; }
.fd { fill: #444; }
.ft { fill: #ecc579; }
.caret { width: 0; height: 0; flex: none; border: 3px solid transparent; border-top: 4px solid #555; border-bottom: 0; }

.top { display: grid; grid-template: 20px 20px / 38px 1fr; flex: none; border-bottom: 1px solid #d8d8d8; }
.logo { grid-row: span 2; border-right: 1px solid #d8d8d8; padding: 6px 0 0 2px; display: flex; }
.logo svg { width: 30px; height: 30px; flex: none; }
.corner { align-self: flex-end; border: 2px solid #777; border-top-color: transparent; border-left-color: transparent; margin-bottom: 2px; margin-left: -2px; }
.titlebar { display: flex; align-items: center; min-width: 0; }
.quick { display: flex; align-items: center; gap: 7px; padding-left: 8px; height: 16px; align-self: flex-start; }
.quick .near { margin: 0 -1px 0 -4px; }
.quick .dim { border-top-color: #aaa; margin-right: 3px; }
.quick .bar { box-shadow: 0 -6px 0 -2px #555; }
h1 { font: inherit; margin: 0 0 2px 78px; white-space: nowrap; }
.winbtns { margin-left: auto; }
.winbtns svg { display: block; width: 90px; height: 16px; margin-right: 5px; }
.tabs { display: flex; align-items: center; padding-left: 4px; color: #333; }
.tabs button { padding: 0 13px; height: 19px; align-self: flex-end; }
.tabs .on { background: #57a3f6; color: #fff; }
.user { margin-left: auto; color: #111; }
.usericons { width: 110px; height: 18px; margin: 0 2px 0 27px; }
.ask { --lens: #aaa; width: 152px; height: 17px; border: 1px solid #aaa; display: flex; align-items: center; }
.ask input { flex: 1; min-width: 0; padding-left: 2px; }
.ask .ic { width: 14px; height: 14px; margin-right: 2px; }
input::placeholder { color: #888; opacity: 1; }

.ribbon { display: flex; flex: none; height: 98px; padding-top: 2px; background: linear-gradient(#fff 30%, #e6eaeb); border-bottom: 2px solid #a5a9ad; }
.group { flex: none; display: flex; flex-direction: column; border-right: 1px solid #cdd0d2; margin-bottom: 2px; }
.gb { display: flex; }
.cols { display: grid; grid-template-rows: repeat(3, 23px); grid-auto-flow: column; column-gap: 11px; }
.cols > * { display: flex; align-items: center; gap: 3px; white-space: nowrap; }
.cols .caret { margin-left: 3px; }
.tight { column-gap: 7px; }
.tight .caret { margin-left: 1px; }
.edit { margin-left: 7px; }
.edit .caret { margin-left: 0; }
.gl { flex: 1; padding-top: 3px; display: flex; align-items: center; justify-content: center; gap: 7px; }
.big { display: flex; flex-direction: column; align-items: center; gap: 5px; padding-top: 4px; height: 69px; }
.big.sel { width: 40px; background: #c8d9f0; height: 67px; margin-top: 2px; padding-top: 3px; }
.big.off { color: #aaa; }
.bi { width: 29px; height: 29px; flex: none; }
.g1 { width: 71px; } .g1 .cols { margin-left: 4px; } .g1 .gl { padding-right: 9px; }
.g2c { width: 194px; padding-left: 9px; } .g2c .gl { padding-right: 9px; }
.g3 { width: 108px; padding-left: 8px; } .g3 .gl { padding-right: 9px; }
.g4 { width: 175px; padding-left: 9px; } .g4 .gl { padding-right: 10px; }
.g5 { width: 119px; padding-left: 11px; } .g5 .gb { gap: 12px; } .g5 .gl { padding-right: 12px; }
.g6 { width: 250px; padding-left: 10px; } .g6 .gb { gap: 9px; } .g6 .gl { padding-right: 8px; }
.g7 { width: 422px; padding-left: 7px; } .g7 .gb { gap: 6px; } .g7 .gl { padding-right: 9px; }
.g7 .cols { column-gap: 9px; }
.chk input { appearance: none; width: 14px; height: 14px; background: #4a9af0; border-radius: 2px; margin-right: 3px; display: grid; place-items: center; }
.chk input::after { content: ""; width: 7px; height: 3px; border: solid #fff; border-width: 0 0 2px 2px; rotate: -45deg; margin-bottom: 3px; }

.filters { display: flex; gap: 5px; flex: none; height: 28px; padding-top: 2px; background: #c8cbd0; border-bottom: 1px solid #8d9297; }
.pick { position: relative; width: 100px; height: 23px; background: #fff; border: 1px solid #a8acb0; display: flex; }
.pick select { appearance: none; width: 100%; padding-left: 3px; }
.pick::after { content: ""; position: absolute; right: 4px; top: 9px; border: 3px solid transparent; border-top: 4px solid #555; border-bottom: 0; pointer-events: none; }
.pick.first { width: 95px; border-left: 0; }
.pick.first select { padding-left: 0; }
.pick.hot { border-color: #4b83d4; }

.work { flex: 1; min-height: 0; display: flex; position: relative; }
.types { width: 108px; flex: none; border-right: 1px solid #c2c4c8; }
.tt { height: 28px; background: #f0f0f0; border-bottom: 1px solid #d0d0d0; display: flex; align-items: center; gap: 4px; padding-right: 3px; }
.pl { margin-right: auto; }
.tt button { width: 25px; height: 24px; border: 1px solid #4ba0f5; border-radius: 3px; background: #e3f0fd; display: grid; place-items: center; }
.tt button svg { width: 16px; height: 16px; }
.types ul { padding-top: 4px; display: flex; flex-direction: column; }
.types li { height: 24px; display: flex; align-items: center; gap: 1px; white-space: nowrap; }
.types li.sub { margin: 1px 0 1px 13px; padding-left: 4px; gap: 6px; height: 22px; }
.types li.on { background: #c8d9f0; }
.parts { width: 261px; flex: none; margin-left: 4px; border: solid #c2c4c8; border-width: 0 1px 1px; display: flex; flex-direction: column; }
.ph { height: 12px; flex: none; background: #d3d5da; display: flex; justify-content: flex-end; padding: 3px 4px 0; }
.ph svg { width: 8px; height: 8px; }
.pt { display: flex; flex: none; height: 22px; background: #e2e2e2; color: #777; border-bottom: 1px solid #c2c4c8; }
.pt button { flex: 1; border-right: 1px solid #c2c4c8; }
.pt .on { background: #f0f0f0; color: #111; font-weight: bold; border: 0; height: 22px; }
.pb { display: flex; flex: none; align-items: center; height: 29px; background: #f0f0f0; padding: 0 2px 0 3px; gap: 15px; }
.pb button { display: flex; align-items: center; gap: 3px; }
.pb .caret { margin: 0 -3px 0 4px; }
.more { width: 8px; height: 8px; margin-left: auto; }
.ps { display: flex; flex: none; align-items: center; height: 20px; border: solid #c2c4c8; border-width: 1px 0; padding: 0 4px 0 1px; }
.ps input { flex: 1; min-width: 0; }
.ps .ic { width: 14px; height: 14px; }
.tree { flex: 1; min-height: 0; overflow: hidden; position: relative; }
.tree li { height: 21px; line-height: 21px; padding-left: 64px; }
.tree .on span { display: inline-block; width: 63px; margin-left: -4px; padding-left: 4px; background: #c8d9f0; }
.tree .t1 { padding-left: 10px; display: flex; align-items: center; gap: 8px; }
.tree .t2 { padding-left: 30px; display: flex; align-items: center; gap: 8px; }
.tw { border: 3px solid #333; border-top-color: transparent; border-left-color: transparent; }
.tree .bar { position: absolute; right: 5px; top: 13px; width: 8px; height: 214px; border-radius: 4px; background: #ccc; }
.split { width: 4px; flex: none; padding-top: 235px; }
.split i { display: block; height: 100px; background: #5c6670; }
.cad { flex: 1; min-width: 0; height: 100%; background: #000; }
.mark { position: absolute; inset: 0; width: 270px; height: 100%; pointer-events: none; }
.mark path { fill: none; stroke: #fa1e12; stroke-width: 3; stroke-linecap: round; stroke-linejoin: round; }
.axg { fill: none; stroke: #008200; }
.rd { fill: none; stroke: #f00; }
.wide { stroke-width: 2; }
.dr { fill: none; stroke: #700; }
.ye { fill: none; stroke: #ff0; }
.cy { fill: none; stroke: #0ff; }
.gn { fill: #2bdf2b; } .br { fill: #0f0; } .dg { fill: #005200; } .gy { fill: #ccc; } .pu { fill: #8a00ff; }
.t { fill: #00a8a8; font: 9px Roboto, "Liberation Sans", sans-serif; }
.pk { fill: #ff8080; }
.ax { fill: #fff; font: 17px Roboto, "Liberation Sans", sans-serif; text-anchor: middle; }
.cube { fill: #15191e; font: bold 9px "Liberation Sans", sans-serif; }

.status { flex: none; height: 28px; background: #dcdcde; border-top: 1px solid #e8e8e8; display: flex; align-items: center; gap: 3px; color: #333; white-space: nowrap; padding-right: 8px; }
.xy { width: 201px; margin-left: -6px; }
.s1 { width: 76px; margin-left: 3px; } .s2 { width: 130px; } .s3 { width: 100px; } .s4 { width: 77px; }
.status button { height: 24px; min-width: 25px; background: #cfcfd1; border: 1px solid #9a9a9c; display: flex; align-items: center; justify-content: center; gap: 5px; }
.status button svg { width: 16px; height: 16px; flex: none; }
.status button:has(.caret) { width: 36px; flex: none; }
.status .hot { background: #fff; border-color: #2f8ff0; }
.status .txt { padding: 0 5px; }
.fps { margin-left: auto; }
```
